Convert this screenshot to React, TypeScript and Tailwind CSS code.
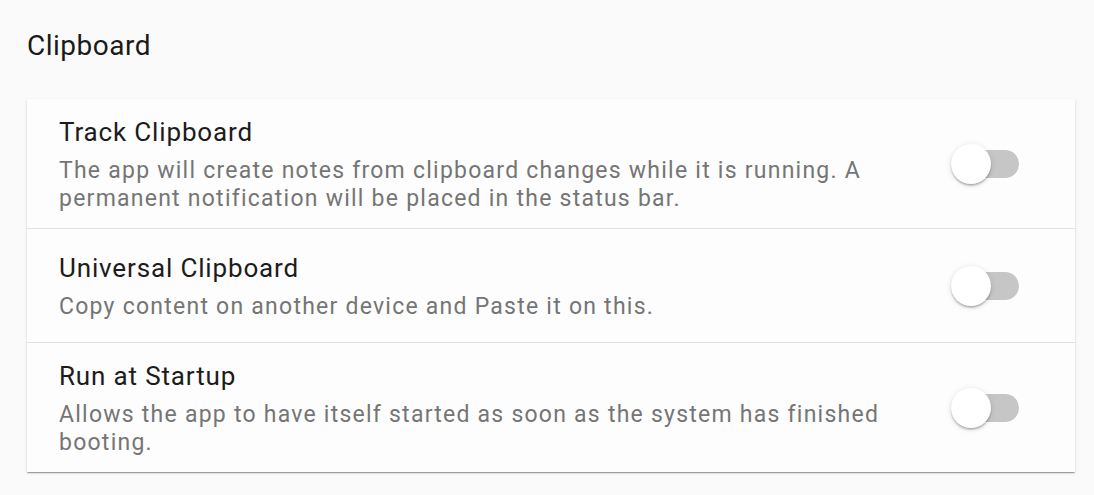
import React, { useState } from "react";

type Setting = {
  id: string;
  title: string;
  description: string;
};

const settings: Setting[] = [
  {
    id: "track",
    title: "Track Clipboard",
    description:
      "The app will create notes from clipboard changes while it is running. A permanent notification will be placed in the status bar.",
  },
  {
    id: "universal",
    title: "Universal Clipboard",
    description: "Copy content on another device and Paste it on this.",
  },
  {
    id: "startup",
    title: "Run at Startup",
    description:
      "Allows the app to have itself started as soon as the system has finished booting.",
  },
];

const Toggle: React.FC<{ on: boolean; onChange: () => void }> = ({ on, onChange }) => (
  <button
    type="button"
    onClick={onChange}
    className="relative w-[68px] h-10 shrink-0 focus:outline-none"
  >
    <span
      className={`absolute left-[2px] right-0 top-[6px] h-7 rounded-full ${
        on ? "bg-[#f48fb1]" : "bg-[#c6c6c6]"
      }`}
    />
    <span
      className={`absolute top-0 w-10 h-10 rounded-full bg-white shadow-[0_2px_2px_-1px_rgba(0,0,0,0.2),0_2px_2px_0_rgba(0,0,0,0.14),0_1px_6px_0_rgba(0,0,0,0.12)] ${
        on ? "left-[28px]" : "left-0"
      }`}
    />
  </button>
);

const App: React.FC = () => {
  const [values, setValues] = useState<Record<string, boolean>>({});

  return (
    <div
      className="min-h-screen bg-[#fafafa] pt-[26px] pl-[27px]"
      style={{ fontFamily: "Roboto, 'Noto Sans', sans-serif" }}
    >
      <h2 className="text-[28px] leading-10 tracking-[0.5px] text-[#1a1a1a] font-normal">
        Clipboard
      </h2>
      <div className="mt-[33px] w-[1048px] bg-[#fdfdfd] shadow-[0_2px_1px_-1px_rgba(0,0,0,0.2),0_1px_1px_0_rgba(0,0,0,0.14),0_1px_3px_0_rgba(0,0,0,0.12)]">
        {settings.map((s, i) => (
          <div
            key={s.id}
            className={`flex items-center min-h-[114px] pl-8 pr-[56px] pt-4 pb-[15px] ${
              i > 0 ? "border-t border-[#e0e0e0]" : ""
            }`}
          >
            <div className="flex-1 pr-6">
              <div className="text-[26px] leading-[35px] tracking-[0.85px] text-[#1c1c1c]">
                {s.title}
              </div>
              <div className="mt-[7px] text-[23px] leading-[28px] tracking-[1.24px] text-[#757575]">
                {s.description}
              </div>
            </div>
            <Toggle
              on={!!values[s.id]}
              onChange={() => setValues((v) => ({ ...v, [s.id]: !v[s.id] }))}
            />
          </div>
        ))}
      </div>
    </div>
  );
};

export default App;
